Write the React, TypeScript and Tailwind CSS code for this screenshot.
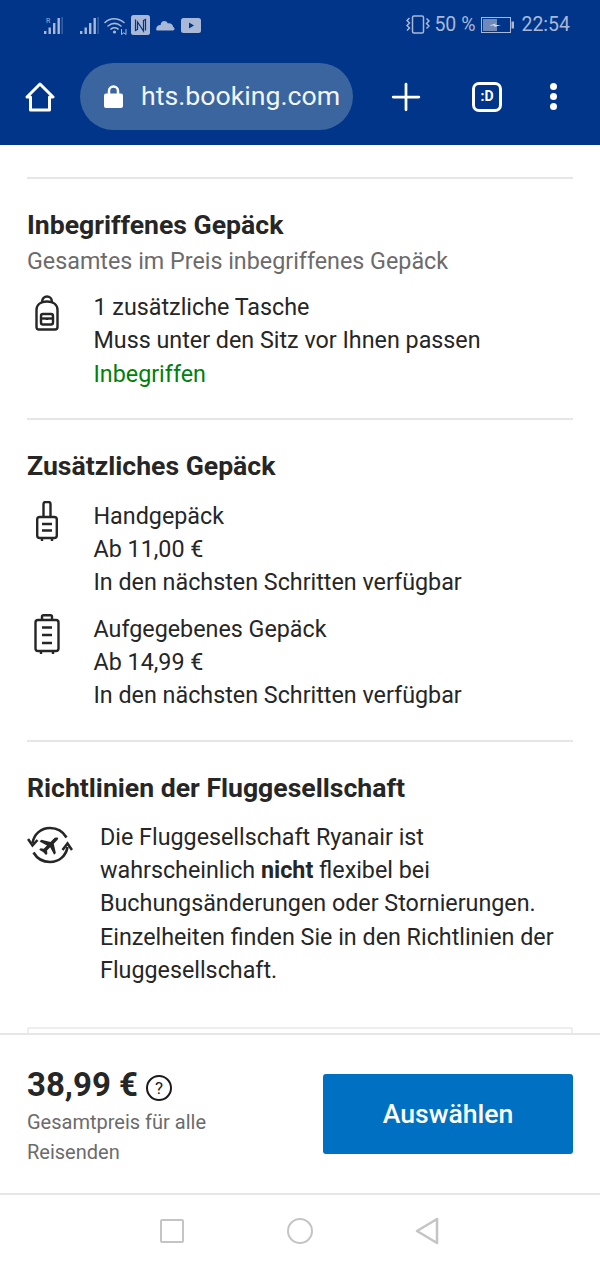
import React from "react";
import { Plus } from "lucide-react";

const SignalIcon = ({ roaming }: { roaming?: boolean }) => (
  <svg width="20" height="19" viewBox="0 0 20 19" fill="#a8b8d6">
    {roaming && (
      <text x="3" y="7" fontSize="7" fontFamily="Roboto, sans-serif" fill="#a8b8d6">
        R
      </text>
    )}
    <rect x="1" y="15" width="2.4" height="3" />
    <rect x="5.5" y="11.5" width="2.4" height="6.5" />
    <rect x="10" y="7" width="2.4" height="11" />
    <rect x="14.5" y="2" width="2.4" height="16" />
    <rect x="18.6" y="1" width="1" height="17" opacity="0.5" />
  </svg>
);

const WifiIcon = () => (
  <svg width="24" height="19" viewBox="0 0 24 19" fill="none" stroke="#a8b8d6" strokeWidth="1.6" strokeLinecap="round">
    <path d="M1 6.500C6 1.500 14 1.500 20 6.500" />
    <path d="M4 10C8 6.800 13 6.800 17 10" />
    <path d="M7 13C9.200 11.400 11.800 11.400 14 13" />
    <circle cx="10.500" cy="16" r="1.600" fill="#a8b8d6" stroke="none" />
    <path d="M17.500 13.500v5l2-1.500M22 13.500v5l-2-1.500" strokeWidth="1" />
  </svg>
);

const NfcIcon = () => (
  <svg width="19" height="20" viewBox="0 0 19 20">
    <rect x="0" y="0" width="19" height="20" rx="2.500" fill="#a8b8d6" />
    <path d="M4.500 4.500v11l2-1V7l6 9V5M14.500 15.500v-11l-2 1" fill="none" stroke="#00358a" strokeWidth="1.200" />
  </svg>
);

const CloudIcon = () => (
  <svg width="19" height="11" viewBox="0 0 19 11" fill="#a8b8d6">
    <path d="M1.500 10.500h15.500c2 0 2-3 .2-3.600C16.800 3.500 13.600 2.600 12 3.400 10 -.6 4.800.4 4.600 5 1.600 5 .2 7.200.2 9c0 1 .5 1.500 1.300 1.500z" />
  </svg>
);

const YoutubeIcon = () => (
  <svg width="20" height="15" viewBox="0 0 20 15">
    <rect width="20" height="15" rx="2.500" fill="#a8b8d6" />
    <path d="M8 4.500l5 3-5 3z" fill="#00358a" />
  </svg>
);

const VibrateIcon = () => (
  <svg width="24" height="20" viewBox="0 0 24 20" fill="none" stroke="#a8b8d6" strokeWidth="1.500">
    <rect x="6.500" y="1" width="11" height="17" rx="1.500" />
    <path d="M3.500 3L1 5.500 3.500 8 1 10.500 3.500 13 1 15.500M20.500 3.500L23 6l-2.500 2.500L23 11l-2.500 2.500" />
  </svg>
);

const BatteryIcon = () => (
  <svg width="33" height="16" viewBox="0 0 33 16">
    <rect x="0.5" y="0.5" width="29" height="15" fill="none" stroke="#a8b8d6" />
    <rect x="2" y="2" width="14" height="12" fill="#6f89b8" />
    <rect x="30.500" y="4.500" width="2.500" height="7" fill="#a8b8d6" />
    <path d="M8 8.500l7-2-1 1.500h6l-7 2 1-1.500z" fill="#dbe3f1" />
  </svg>
);

const HomeIcon = () => (
  <svg width="30" height="30" viewBox="0 0 30 30" fill="none" stroke="#fff" strokeWidth="3" strokeLinejoin="round" strokeLinecap="round">
    <path d="M2 15L15 2l13 13h-3.500v13h-19V15z" />
  </svg>
);

const LockIcon = () => (
  <svg width="19" height="23" viewBox="0 0 19 23">
    <path d="M5 10V6a4.500 4.500 0 0 1 9 0v4" fill="none" stroke="#fff" strokeWidth="2.500" />
    <rect x="0" y="8.500" width="19" height="14.500" rx="2" fill="#fff" />
  </svg>
);

const BackpackIcon = () => (
  <svg width="24" height="36" viewBox="0 0 24 36" fill="none" stroke="#262626" strokeWidth="2.400">
    <path d="M1.500 15C1.500 9.500 6 6.500 12 6.500s10.500 3 10.500 8.500v17c0 1.500-1 2.500-2.500 2.500H4c-1.500 0-2.500-1-2.500-2.500z" />
    <path d="M7 7c0-3.500 2.500-5.500 5-5.500s5 2 5 5.500" />
    <rect x="6" y="19" width="12" height="10.500" rx="2" />
    <path d="M6 23.500h12" />
    <path d="M12 23v2" strokeWidth="2.500" />
  </svg>
);

const CabinBagIcon = () => (
  <svg width="22" height="40" viewBox="0 0 22 40" fill="none" stroke="#262626" strokeWidth="2.400">
    <path d="M7.500 16V3c0-1 .8-2 2-2h3c1.200 0 2 1 2 2v13" />
    <rect x="1.200" y="16" width="19.600" height="21" rx="2.500" />
    <path d="M6 23h10M6 29.500h10" />
    <path d="M6 37v3M16 37v3" />
  </svg>
);

const CheckedBagIcon = () => (
  <svg width="26" height="40" viewBox="0 0 26 40" fill="none" stroke="#262626" strokeWidth="2.400">
    <path d="M8 6V2.500C8 1.500 8.800 1.200 9.500 1.200h7c.7 0 1.500.3 1.500 1.300V6" />
    <rect x="1.500" y="6" width="23" height="31" rx="2.500" />
    <path d="M8 13.500h10M8 21h10M8 29h10" />
    <path d="M7 37v3M19 37v3" />
  </svg>
);

const PolicyIcon = () => (
  <svg width="46" height="38" viewBox="0 0 46 38" fill="none" stroke="#262626" strokeWidth="2.600">
    <path d="M5.500 17C7 8 14 2 23 2c7 0 13 3.500 16.500 9.500" />
    <path d="M1 13l4.500 6.500L10.500 14" />
    <path d="M40.500 21C39 30 32 36 23 36c-7 0-13-3.500-16.500-9.500" />
    <path d="M35.500 24l5-6.500L45 24" />
    <path
      transform="translate(23 19) rotate(45)"
      d="M0 -11c1.200 0 1.800 1.500 1.800 3v4.500l8 5v2.500l-8-2.500v4.500l2.500 2v2L0 9.800l-4.300 1.200v-2l2.500-2v-4.500l-8 2.500v-2.500l8-5v-4.500c0-1.500.6-3 1.800-3z"
      fill="#262626"
      stroke="none"
    />
  </svg>
);

const Divider = () => <div className="h-[2px] bg-[#e6e6e6]" />;

const BagRow = ({ icon, lines, iconTop }: { icon: React.ReactNode; lines: React.ReactNode[]; iconTop: string }) => (
  <div className="flex gap-[26.5px]">
    <div className={`flex w-[40px] shrink-0 justify-center ${iconTop}`}>{icon}</div>
    <div className="text-[23.3px] leading-[33.3px] text-[#262626]">
      {lines.map((line, i) => (
        <div key={i}>{line}</div>
      ))}
    </div>
  </div>
);

export default function App() {
  return (
    <div className="flex h-[1266px] w-[600px] flex-col overflow-hidden bg-white font-['Roboto',sans-serif]">
      <header className="h-[145px] shrink-0 bg-[#00358a]">
        <div className="flex h-[50px] items-center justify-between pl-[43px] pr-[30px]">
          <div className="flex items-center">
            <SignalIcon roaming />
            <div className="ml-[16px]">
              <SignalIcon />
            </div>
            <div className="ml-[5px]">
              <WifiIcon />
            </div>
            <div className="ml-[3px]">
              <NfcIcon />
            </div>
            <div className="ml-[6px]">
              <CloudIcon />
            </div>
            <div className="ml-[6px]">
              <YoutubeIcon />
            </div>
          </div>
          <div className="flex items-center text-[19.5px] text-[#a8b8d6]">
            <VibrateIcon />
            <span className="ml-[4px]">50 %</span>
            <div className="ml-[6px]">
              <BatteryIcon />
            </div>
            <span className="ml-[7px]">22:54</span>
          </div>
        </div>
        <div className="flex h-[95px] items-center pb-[2px]">
          <div className="ml-[25px]">
            <HomeIcon />
          </div>
          <div className="ml-[25px] flex h-[67px] w-[273px] items-center rounded-full bg-[#3a659f]">
            <div className="ml-[24px]">
              <LockIcon />
            </div>
            <span className="ml-[18px] whitespace-nowrap text-[26.7px] text-[#f2f5fa]">hts.booking.com</span>
          </div>
          <Plus size={44} color="#fff" strokeWidth={1.500} className="ml-[31px]" />
          <div className="ml-[44px] flex h-[30px] w-[30px] items-center justify-center rounded-[7px] border-[3px] border-white text-[14px] font-bold text-white">
            :D
          </div>
          <div className="ml-[48px] flex flex-col gap-[3px]">
            <div className="h-[7px] w-[7px] rounded-full bg-white" />
            <div className="h-[7px] w-[7px] rounded-full bg-white" />
            <div className="h-[7px] w-[7px] rounded-full bg-white" />
          </div>
        </div>
      </header>

      <main className="flex-1 overflow-hidden px-[27px] pt-[32px]">
        <Divider />
        <section className="pb-[27px] pt-[29px]">
          <h2 className="text-[26.6px] font-bold leading-[34px] text-[#262626]">Inbegriffenes Gepäck</h2>
          <p className="mb-[13px] mt-[2px] text-[23.3px] leading-[34px] text-[#6b6b6b]">
            Gesamtes im Preis inbegriffenes Gepäck
          </p>
          <BagRow
            icon={<BackpackIcon />}
            iconTop="pt-[4px]"
            lines={[
              "1 zusätzliche Tasche",
              "Muss unter den Sitz vor Ihnen passen",
              <span className="text-[#008009]">Inbegriffen</span>,
            ]}
          />
        </section>
        <Divider />
        <section className="pb-[27px] pt-[29px]">
          <h2 className="mb-[17px] text-[26.6px] font-bold leading-[34px] text-[#262626]">Zusätzliches Gepäck</h2>
          <div className="flex flex-col gap-[13px]">
            <BagRow
              icon={<CabinBagIcon />}
              iconTop="pt-[1px]"
              lines={["Handgepäck", "Ab 11,00 €", "In den nächsten Schritten verfügbar"]}
            />
            <BagRow
              icon={<CheckedBagIcon />}
              iconTop="pt-[1px]"
              lines={["Aufgegebenes Gepäck", "Ab 14,99 €", "In den nächsten Schritten verfügbar"]}
            />
          </div>
        </section>
        <Divider />
        <section className="pb-[40px] pt-[29px]">
          <h2 className="mb-[16px] text-[26.6px] font-bold leading-[34px] text-[#262626]">
            Richtlinien der Fluggesellschaft
          </h2>
          <div className="flex gap-[27px]">
            <div className="w-[46px] shrink-0 pt-[5px]">
              <PolicyIcon />
            </div>
            <p className="text-[23.3px] leading-[33.3px] text-[#262626]">
              Die Fluggesellschaft Ryanair ist wahrscheinlich <b className="font-bold">nicht</b> flexibel bei
              Buchungsänderungen oder Stornierungen. Einzelheiten finden Sie in den Richtlinien der
              Fluggesellschaft.
            </p>
          </div>
        </section>
        <div className="h-[20px] rounded-t-[2px] border-2 border-[#eeeeee]" />
      </main>

      <footer className="flex h-[162px] shrink-0 items-center justify-between border-y-2 border-[#e6e6e6] bg-white px-[27px]">
        <div className="w-[250px] pt-[4px]">
          <div className="flex items-center">
            <span className="text-[33px] font-bold leading-[40px] text-[#262626]">38,99 €</span>
            <span className="ml-[8px] mt-[6px] flex h-[26px] w-[26px] items-center justify-center rounded-full border-2 border-[#1a1a1a] text-[17px] leading-none text-[#1a1a1a]">
              ?
            </span>
          </div>
          <p className="mt-[2px] w-[190px] text-[20px] leading-[30px] text-[#6b6b6b]">Gesamtpreis für alle Reisenden</p>
        </div>
        <button className="flex h-[80px] w-[250px] items-center justify-center rounded-[3px] bg-[#0071c2] text-[26.6px] font-medium text-white">
          Auswählen
        </button>
      </footer>

      <nav className="flex h-[71px] shrink-0 items-center pl-[160px]">
        <div className="h-[24px] w-[24px] rounded-[2px] border-[2.500px] border-[#c4c4c4]" />
        <div className="ml-[103px] h-[26px] w-[26px] rounded-full border-[2.500px] border-[#c4c4c4]" />
        <svg className="ml-[102px]" width="24" height="28" viewBox="0 0 24 28" fill="none" stroke="#c4c4c4" strokeWidth="2.500" strokeLinejoin="round">
          <path d="M22 2L2 14l20 12z" />
        </svg>
      </nav>
    </div>
  );
}
